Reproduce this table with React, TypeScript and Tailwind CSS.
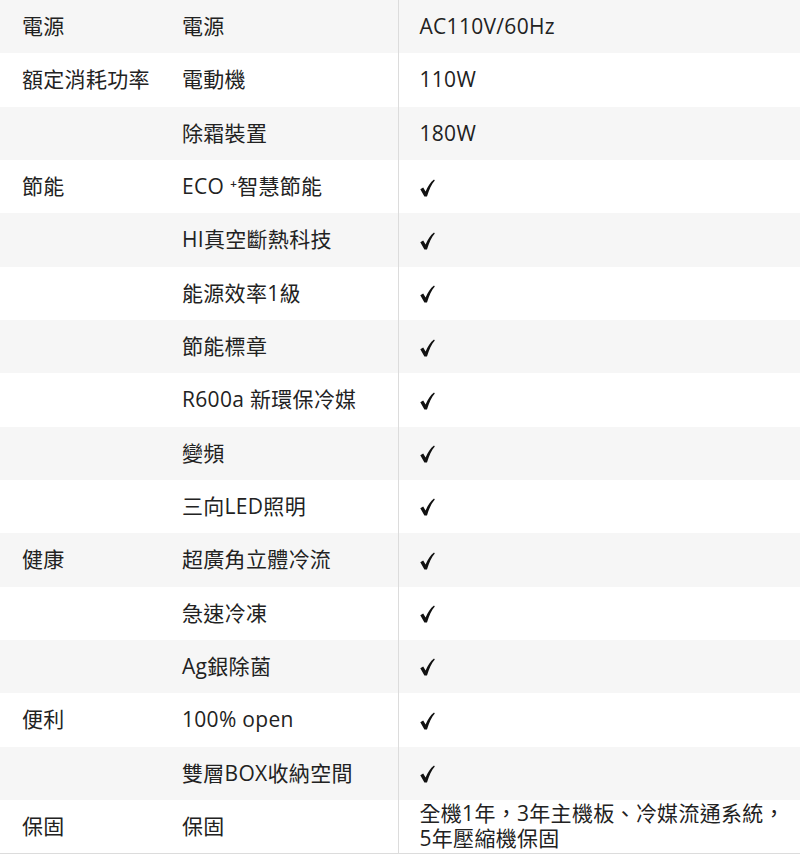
import React from "react";

type Row = { group?: string; item: string; value: string };

const rows: Row[] = [
    { group: "電源", item: "電源", value: "AC110V/60Hz" },
    { group: "額定消耗功率", item: "電動機", value: "110W" },
    { item: "除霜裝置", value: "180W" },
    { group: "節能", item: "ECO ⁺智慧節能", value: "✓" },
    { item: "HI真空斷熱科技", value: "✓" },
    { item: "能源效率1級", value: "✓" },
    { item: "節能標章", value: "✓" },
    { item: "R600a 新環保冷媒", value: "✓" },
    { item: "變頻", value: "✓" },
    { item: "三向LED照明", value: "✓" },
    { group: "健康", item: "超廣角立體冷流", value: "✓" },
    { item: "急速冷凍", value: "✓" },
    { item: "Ag銀除菌", value: "✓" },
    { group: "便利", item: "100% open", value: "✓" },
    { item: "雙層BOX收納空間", value: "✓" },
    { group: "保固", item: "保固", value: "全機1年，3年主機板、冷媒流通系統，\n5年壓縮機保固" },
];

function Check() {
    return (
        <svg width="15" height="18" viewBox="0 0 15 18" className="inline-block align-middle relative -top-px">
            <path d="M0.3 10.3 L3.2 8.6 L5.6 12.6 C7.6 7.4 10.4 3.2 14 0.4 L14.8 1.4 C11.6 5 9 10.6 7 17.5 L4.4 17.5 Z" fill="#111" />
        </svg>
    );
}

export default function App() {
    return (
        <div className="w-[800px] bg-white text-[#222] font-['Open_Sans','Noto_Sans_CJK_TC',sans-serif] text-[21px] tracking-[0.3px]">
            <table className="w-full border-collapse border-b border-[#dcdcdc]">
                <tbody>
                    {rows.map((r, i) => (
                        <tr key={i} className={i % 2 === 0 ? "h-[53.33px] bg-[#f6f6f6]" : "h-[53.33px] bg-white"}>
                            <td className="w-[160px] pl-[22px] align-middle whitespace-nowrap">{r.group}</td>
                            <td className="w-[238px] pl-[22px] align-middle whitespace-nowrap">{r.item}</td>
                            <td className="border-l border-[#dcdcdc] pl-[21px] align-middle leading-[25px] whitespace-pre-line">
                                {r.value === "✓" ? <Check /> : r.value}
                            </td>
                        </tr>
                    ))}
                </tbody>
            </table>
        </div>
    );
}
